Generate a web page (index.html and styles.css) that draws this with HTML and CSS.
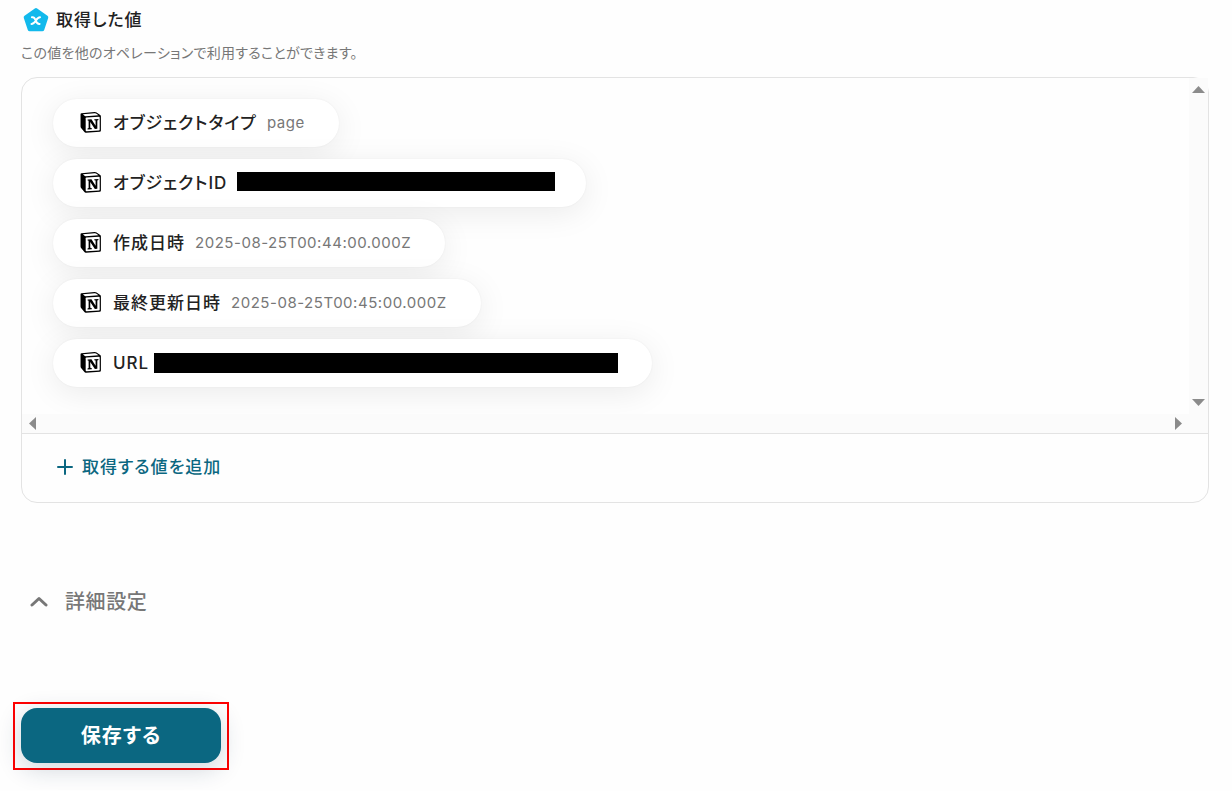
FILE: index.html
```html
<!DOCTYPE html>
<html lang="ja">
<head>
<meta charset="utf-8">
<meta name="viewport" content="width=device-width, initial-scale=1">
<title>取得した値</title>
<link rel="stylesheet" href="styles.css">
</head>
<body>
<svg class="defs" width="0" height="0" aria-hidden="true">
  <symbol id="cube" viewBox="0 0 24 24">
    <path d="M1.600 1.300 15.800 .1 Q17.200 0 18.100 .6 L22 3.300 Q22.800 3.900 22.800 4.800 V20.100 Q22.800 21.500 21.400 21.600 L6.600 22.500 Q5.400 22.600 4.600 21.600 L1.200 17.400 Q.6 16.500 .6 15.500 V2.500 Q.6 1.400 1.600 1.300Z" fill="#000"/>
    <path d="M3.200 2.400 15.900 1.300 Q16.800 1.200 17.500 1.700 L20.200 3.600 6.300 4.500 Q5.500 4.600 4.900 4Z" fill="#fff"/>
    <path d="M6.900 6 20.700 5.200 Q21.500 5.200 21.500 6 V19.400 Q21.500 20.200 20.700 20.300 L7 21.100 Q6.200 21.100 6.200 20.300 V6.800 Q6.200 6.100 6.900 6Z" fill="#fff"/>
    <path d="M8.300 8.200 12.500 7.900 17 14.900 V9.400 L15.600 9 V7.800 L20.100 7.500 V8.700 L18.900 9.200 V18.300 L16.200 18.600 11.200 10.800 V17.300 L12.900 17.800 V18.800 L8.200 19.100 V18 L9.400 17.500 V9.600 L8.300 9.300Z" fill="#000"/>
  </symbol>
</svg>
<main class="page">
  <header class="section-head">
    <svg class="section-icon" viewBox="0 0 26 26" aria-hidden="true">
      <path d="M13 3 23.300 10.400 19.300 22.300H6.700L2.700 10.400Z" fill="#12b9ec" stroke="#12b9ec" stroke-width="4" stroke-linejoin="round"/>
      <path d="M8.900 10.200H9.600C11.600 10.200 11.900 11.600 12.700 13.600S14.300 17.300 16.600 17M17 10.200C14.800 10.200 13.800 12 12.700 13.700S10.400 17 8.500 17" fill="none" stroke="#fff" stroke-width="2" stroke-linecap="round"/>
    </svg>
    <h1 class="section-title">取得した値</h1>
  </header>
  <p class="section-note">この値を他のオペレーションで利用することができます。</p>

  <section class="panel">
    <div class="viewport">
      <ul class="values">
        <li class="pill"><svg class="pill-icon" aria-hidden="true"><use href="#cube"/></svg><span class="pill-label">オブジェクトタイプ</span><span class="pill-value">page</span></li>
        <li class="pill pill-id"><svg class="pill-icon" aria-hidden="true"><use href="#cube"/></svg><span class="pill-label">オブジェクトID</span><span class="mask mask-id"></span></li>
        <li class="pill"><svg class="pill-icon" aria-hidden="true"><use href="#cube"/></svg><span class="pill-label">作成日時</span><span class="pill-value">2025-08-25T00:44:00.000Z</span></li>
        <li class="pill"><svg class="pill-icon" aria-hidden="true"><use href="#cube"/></svg><span class="pill-label">最終更新日時</span><span class="pill-value">2025-08-25T00:45:00.000Z</span></li>
        <li class="pill pill-url"><svg class="pill-icon" aria-hidden="true"><use href="#cube"/></svg><span class="pill-label">URL</span><span class="mask mask-url"></span></li>
      </ul>
      <div class="track track-y" aria-hidden="true">
        <svg class="arrow-y" viewBox="0 0 13 7"><path d="M0 7 6.500 0 13 7Z"/></svg>
        <svg class="arrow-y" viewBox="0 0 13 7"><path d="M0 0H13L6.500 7Z"/></svg>
      </div>
      <div class="track track-x" aria-hidden="true">
        <svg class="arrow-x" viewBox="0 0 7 13"><path d="M7 0V13L0 6.500Z"/></svg>
        <svg class="arrow-x" viewBox="0 0 7 13"><path d="M0 0 7 6.500 0 13Z"/></svg>
      </div>
    </div>
    <div class="panel-foot">
      <button class="add" type="button">
        <svg class="add-icon" viewBox="0 0 16 16" aria-hidden="true"><path d="M8 1V15M1 8H15"/></svg>取得する値を追加
      </button>
    </div>
  </section>

  <button class="advanced" type="button">
    <svg class="advanced-icon" viewBox="0 0 18 12" aria-hidden="true"><path d="M2 9 9 2.500 16 9"/></svg>詳細設定
  </button>

  <div class="highlight"><button class="save" type="button">保存する</button></div>
</main>
</body>
</html>
```
FILE: styles.css
```css
* { box-sizing: border-box; }
body {
  margin: 0;
  background: #fefefe;
  color: #222;
  font-family: Inter, "Noto Sans CJK JP", sans-serif;
  font-feature-settings: "palt";
  letter-spacing: 1px;
}
button {
  border: 0;
  background: none;
  padding: 0;
  font: inherit;
  font-feature-settings: inherit;
  letter-spacing: inherit;
  cursor: pointer;
}
.defs { position: absolute; }
.page { padding: 6px 23px 20px 21px; }
.section-head { display: flex; align-items: center; gap: 7px; padding-left: 2px; }
.section-icon { width: 26px; height: 28px; }
.section-title { margin: 0; font-size: 17px; line-height: 28px; font-weight: 500; }
.section-note { margin: 9px 0 14px; font-size: 14px; line-height: 20px; letter-spacing: 0.02em; color: #777; }

.panel { border: 1px solid #e3e3e3; border-radius: 16px; }
.viewport {
  display: grid;
  grid-template-columns: 1fr 20px;
  grid-template-rows: 1fr 19px;
  margin-right: -1px;
  border-bottom: 1px solid #e3e3e3;
}
.values {
  display: flex;
  flex-direction: column;
  align-items: flex-start;
  gap: 12px;
  margin: 0;
  padding: 21px 31px 27px;
  list-style: none;
  overflow: hidden;
  border-top-left-radius: 16px;
}
.pill {
  display: flex;
  align-items: center;
  height: 48px;
  padding: 0 34px 0 27px;
  border-radius: 24px;
  background: #fff;
  box-shadow: 0 0 2px rgba(0, 0, 0, 0.06), 0 6px 32px rgba(0, 0, 0, 0.08);
}
.pill-id { padding-right: 31px; }
.pill-icon { width: 22px; height: 22px; margin-right: 11px; }
.pill-label { font-size: 17px; line-height: 24px; font-weight: 500; }
.pill-value { margin-left: 10px; font-size: 15px; line-height: 24px; letter-spacing: 0.035em; color: #777; }
.mask { height: 20px; background: #000; }
.mask-id { width: 318px; height: 19px; margin: 0 0 3px 10px; }
.mask-url { width: 464px; margin-left: 5px; }
.track { display: flex; justify-content: space-between; align-items: center; background: #fbfbfb; fill: #8b8b8b; }
.track-y { flex-direction: column; padding: 8px 0; margin-right: 1px; }
.track-x { grid-column: 1 / -1; padding: 0 26px 0 7px; margin-right: 1px; }
.arrow-y { width: 13px; height: 7px; }
.arrow-x { width: 7px; height: 13px; }
.panel-foot { padding: 19px 35px 21px; }
.add { display: flex; align-items: center; gap: 9px; color: #0b6781; font-size: 17px; line-height: 28px; font-weight: 500; }
.add-icon { width: 16px; height: 16px; fill: none; stroke: #0b6781; stroke-width: 2; stroke-linecap: round; }

.advanced { display: flex; align-items: center; gap: 17px; margin: 84px 0 0 9px; color: #777; font-size: 20px; line-height: 30px; font-weight: 500; letter-spacing: 0.03em; }
.advanced-icon { width: 18px; height: 12px; fill: none; stroke: #777; stroke-width: 3; stroke-linecap: round; stroke-linejoin: round; }

.highlight { display: inline-block; margin: 85px 0 0 -8px; padding: 4px 6px 5px; border: 2px solid #f00; vertical-align: top; }
.save {
  display: block;
  width: 200px;
  height: 55px;
  border-radius: 16px;
  background: #0b6781;
  box-shadow: 0 6px 24px rgba(20, 50, 80, 0.2);
  color: #fff;
  font-size: 20px;
  line-height: 28px;
  font-weight: 700;
}
```
